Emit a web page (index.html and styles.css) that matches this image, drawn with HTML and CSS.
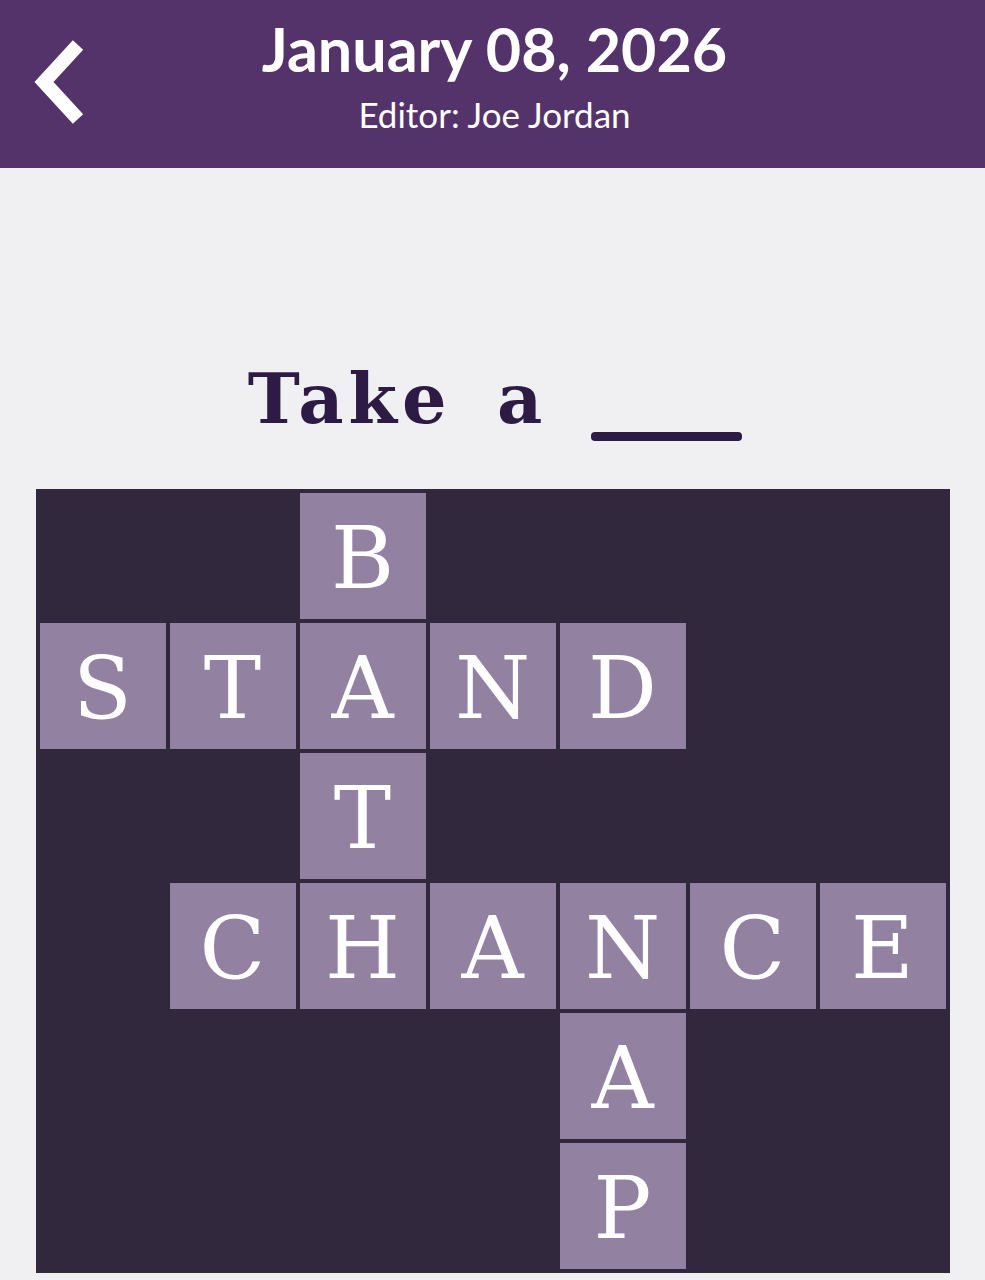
FILE: index.html
```html
<!doctype html>
<html>
    <head>
        <link rel="stylesheet" href="styles.css">
    </head>
    <body>
        <header class="topbar">
            <a class="back" href="#">
                <svg width="100" height="168" viewBox="0 0 100 168">
                    <polyline points="78,45 44,82 78,119" fill="none" stroke="white" stroke-width="14" stroke-linecap="butt" stroke-linejoin="miter" />
                </svg>
            </a>
            <div class="titles">
                <h1>January 08, 2026</h1>
                <p>Editor: Joe Jordan</p>
            </div>
        </header>
        <main>
            <h2 class="clue"><span class="words">Take a</span><span class="blank"></span></h2>
            <div class="board">
                <div class="cell"></div><div class="cell"></div><div class="cell on">B</div><div class="cell"></div><div class="cell"></div><div class="cell"></div><div class="cell"></div>
                <div class="cell on">S</div><div class="cell on">T</div><div class="cell on">A</div><div class="cell on">N</div><div class="cell on">D</div><div class="cell"></div><div class="cell"></div>
                <div class="cell"></div><div class="cell"></div><div class="cell on">T</div><div class="cell"></div><div class="cell"></div><div class="cell"></div><div class="cell"></div>
                <div class="cell"></div><div class="cell on">C</div><div class="cell on">H</div><div class="cell on">A</div><div class="cell on">N</div><div class="cell on">C</div><div class="cell on">E</div>
                <div class="cell"></div><div class="cell"></div><div class="cell"></div><div class="cell"></div><div class="cell on">A</div><div class="cell"></div><div class="cell"></div>
                <div class="cell"></div><div class="cell"></div><div class="cell"></div><div class="cell"></div><div class="cell on">P</div><div class="cell"></div><div class="cell"></div>
            </div>
        </main>
    </body>
</html>
```

FILE: styles.css
```css
* {
    margin: 0;
    padding: 0;
    box-sizing: border-box;
}
html,
body {
    height: 100%;
}
body {
    background: #f0f0f2;
    font-family: "Lato", "Noto Sans", sans-serif;
}
.topbar {
    position: relative;
    height: 168px;
    background: #54336b;
    color: white;
    display: flex;
    justify-content: center;
}
.back {
    position: absolute;
    left: 0;
    top: 0;
    display: block;
    line-height: 0;
}
.titles {
    text-align: center;
    padding-top: 13px;
    padding-left: 4px;
}
.titles h1 {
    font-size: 61px;
    font-weight: 700;
    line-height: 72px;
}
.titles p {
    font-size: 35px;
    line-height: 42px;
    margin-top: 8px;
}
main {
    display: flex;
    flex-direction: column;
    align-items: center;
}
.clue {
    font-family: "DejaVu Serif", serif;
    font-weight: 700;
    font-size: 70px;
    color: #2d1a45;
    line-height: 90px;
    margin-top: 186px;
    margin-bottom: 45px;
    padding-left: 5px;
    white-space: pre;
}
.clue .words {
    letter-spacing: 5px;
    word-spacing: 16px;
}
.clue .blank {
    display: inline-block;
    width: 151px;
    height: 9px;
    margin-left: 44px;
    border-radius: 4px;
    background: #2d1a45;
    vertical-align: -18px;
}
.board {
    display: grid;
    grid-template-columns: repeat(7, 126px);
    grid-auto-rows: 126px;
    gap: 4px;
    padding: 4px;
    background: #32283d;
}
.cell {
    font-family: "DejaVu Serif", serif;
    font-size: 86px;
    color: white;
    display: flex;
    align-items: center;
    justify-content: center;
    line-height: 1;
    padding-top: 4px;
}
.cell.on {
    background: #9281a1;
}
```
